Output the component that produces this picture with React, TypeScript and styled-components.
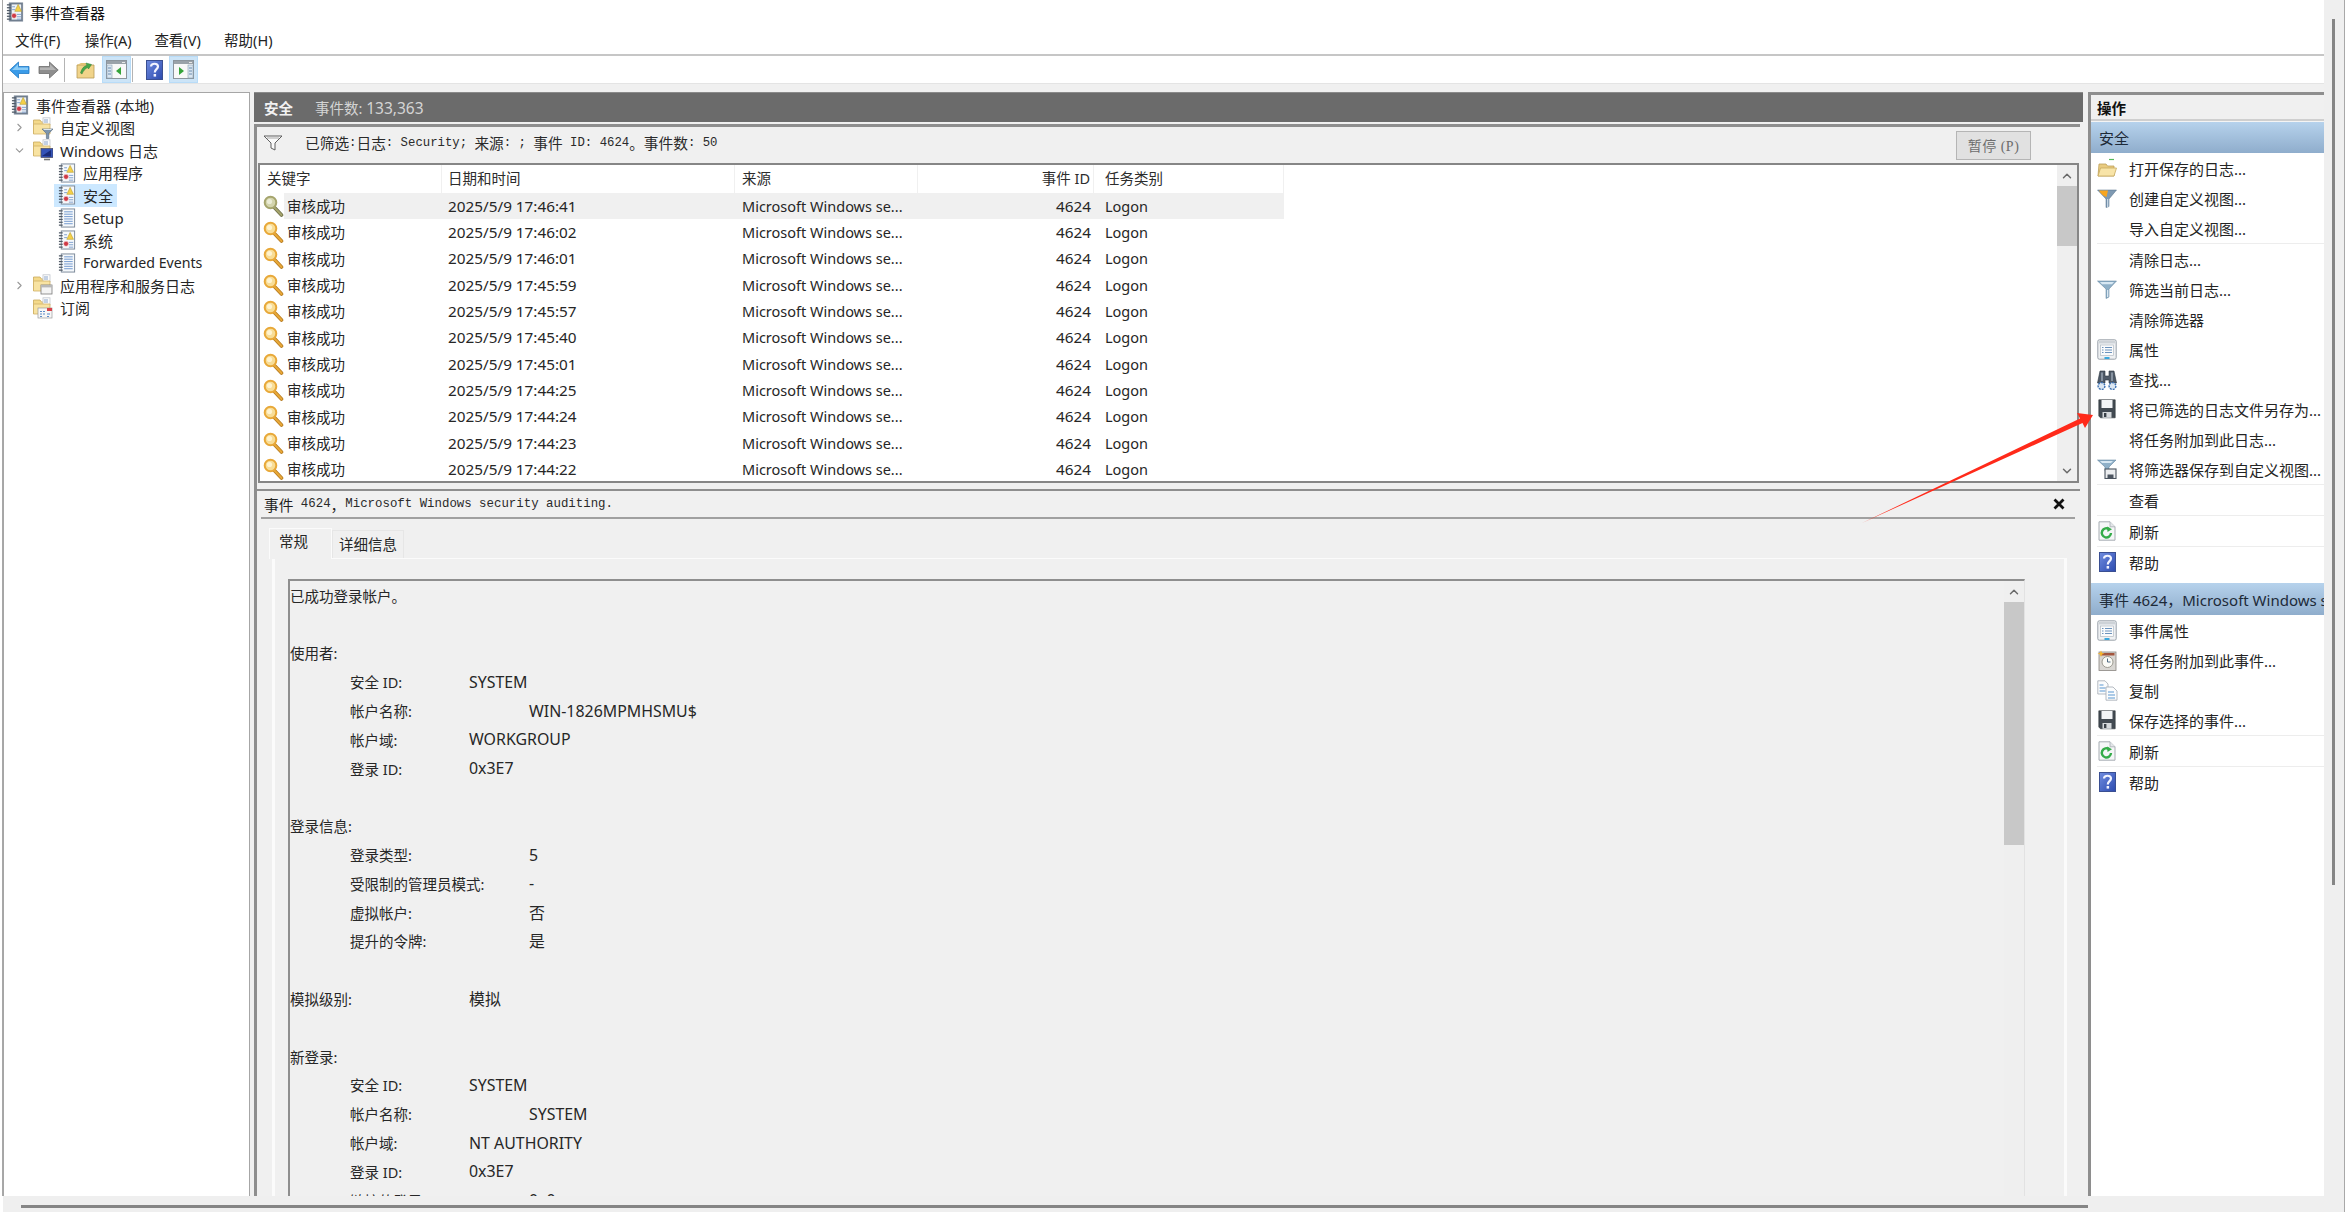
import React from 'react';
import styled, { createGlobalStyle } from 'styled-components';
import { ChevronRight, ChevronDown, ChevronUp } from 'lucide-react';

const UI = '"Noto Sans", "Noto Sans CJK SC", sans-serif';
const MONO = '"Liberation Mono", "Noto Sans CJK SC", monospace';

const Global = createGlobalStyle`
  html, body { margin: 0; padding: 0; overflow: hidden; background: #fff; }
  * { box-sizing: border-box; }
  svg { display: block; flex: none; }
`;

const Screen = styled.div`
  position: relative; width: 2345px; height: 1212px; overflow: hidden; background: #fff;
  display: flex; flex-direction: column; padding-left: 2px;
  font-family: ${UI}; font-size: 15px; color: #262626;
`;
const Upper = styled.div`display: flex; height: 1196px; flex: none;`;
const Main = styled.div`
  width: 2322px; flex: none; display: flex; flex-direction: column;
  border-left: 1px solid #a8a8a8;
`;
const VScroll = styled.div`
  flex: 1; background: #efefef; padding: 19px 0 0 8px; border-right: 1px solid #a8a8a8;
`;
const VThumb = styled.div`width: 3px; height: 866px; background: #858585;`;
const HScroll = styled.div`
  flex: 1; background: #efefef; padding: 9px 0 0 18px; margin-left: 1px; border-right: 1px solid #a8a8a8;
`;
const HThumb = styled.div`width: 2067px; height: 3px; background: #858585;`;

const TitleBar = styled.div`
  height: 28px; display: flex; align-items: center; gap: 6px; padding: 0 0 4px 3px; color: #111; flex: none;
`;
const MenuBar = styled.div`
  height: 28px; display: flex; align-items: center; padding: 0 0 4px 12px; gap: 20px; flex: none;
  border-bottom: 2px solid #c6c6c6; font-size: 14.5px; color: #222;
`;
const MenuItem = styled.span`width: 49.7px; white-space: nowrap;`;
const ToolBar = styled.div`
  height: 28px; display: flex; align-items: center; padding-left: 4px; flex: none;
  border-bottom: 1px solid #e4e4e4;
`;
const ToolBtn = styled.div<{ $ml?: number; $on?: boolean }>`
  width: ${p => (p.$on ? 29 : 24)}px; height: 27px; margin-left: ${p => p.$ml ?? 0}px;
  display: flex; align-items: center; justify-content: center;
  background: ${p => (p.$on ? '#cce4f7' : 'transparent')};
  border: 1px solid ${p => (p.$on ? '#b8dcf8' : 'transparent')};
`;
const ToolSep = styled.div<{ $ml: number }>`
  width: 1px; height: 24px; background: #b4b4b4; margin-left: ${p => p.$ml}px;
`;

const Workspace = styled.div`
  flex: 1; min-height: 0; display: flex; background: #f0f0f0; padding-top: 8px; overflow: hidden;
`;
const TreePanel = styled.div`
  width: 247px; flex: none; background: #fff; border: 1px solid #a6a6a6; border-bottom: none;
  padding-top: 1px; margin-right: 4px;
`;
const TreeRow = styled.div<{ $pad: number }>`
  height: 22.5px; display: flex; align-items: center; padding-left: ${p => p.$pad}px; white-space: nowrap;
`;
const TreeItem = styled.div<{ $sel?: boolean }>`
  display: flex; align-items: center; height: 23px; gap: 7px; padding: 0 4px;
  background: ${p => (p.$sel ? '#cce8ff' : 'transparent')};
`;
const TreeChevron = styled.div`width: 20px; display: flex; align-items: center; color: #999;`;
const FolderRow = styled.div`display: flex; align-items: center; gap: 7px;`;
const NarrowLatin = styled.span`font-size: 14.2px;`;

const Center = styled.div`width: 1829px; flex: none; display: flex; flex-direction: column; overflow: hidden;`;
const LogHeader = styled.div`
  height: 30px; flex: none; background: #6b6b6b; display: flex; align-items: center;
  padding-left: 10px; gap: 22px; border-top: 1px solid #8a8a8a; margin-bottom: 2px;
`;
const LogTitle = styled.span`font-weight: 700; color: #f2f2f2; font-size: 14.5px;`;
const LogCount = styled.span`color: #d4d4d4; font-size: 14.5px;`;
const Digits = styled.span`font-size: 15.5px;`;
const CenterBody = styled.div`
  width: 1826px; flex: 1; min-height: 0; display: flex; flex-direction: column;
  border-left: 3px solid #8e8e8e; border-top: 3px solid #8e8e8e;
`;
const FilterBar = styled.div`
  height: 36px; flex: none; display: flex; align-items: center; padding: 0 49px 0 6px; background: #f0f0f0;
`;
const FilterIconWrap = styled.div`margin-bottom: 5px;`;
const FilterText = styled.div`
  flex: 1; margin: 0 0 5px 22px; white-space: pre; font-size: 14.7px; color: #2a2a2a; display: flex; align-items: center;
`;
const Mono = styled.span`font-family: ${MONO}; font-size: 12.3px;`;
const PauseBtn = styled.div`
  width: 75px; height: 29px; background: #e1e1e1; border: 1px solid #b5b5b5; color: #6d6d6d;
  display: flex; align-items: center; justify-content: center; font-size: 14px; font-family: "Liberation Serif", "Noto Sans CJK SC", serif;
  letter-spacing: 0.5px;
`;
const ListBox = styled.div`
  height: 320px; flex: none; margin: 0 1px; border: 2px solid #868686; background: #fff; display: flex;
`;
const Table = styled.div`flex: 1; min-width: 0; overflow: hidden;`;
const HeadRow = styled.div`
  height: 27.5px; display: grid; grid-template-columns: 182px 293px 183px 176px 190px; align-items: stretch;
  font-size: 14.5px; color: #2c2c2c;
`;
const HeadCell = styled.div<{ $pad?: number; $right?: boolean }>`
  display: flex; align-items: center; padding: 0 3px 2px ${p => p.$pad ?? 6}px;
  justify-content: ${p => (p.$right ? 'flex-end' : 'flex-start')};
  border-right: 1px solid #f0f0f0;
`;
const DataRow = styled.div`
  height: 26.33px; display: grid; grid-template-columns: 24px 158px 293px 183px 176px 190px; align-items: stretch;
`;
const IconCell = styled.div`display: flex; align-items: center; padding-left: 3px;`;
const Cell = styled.div<{ $on?: boolean; $pad?: number; $right?: boolean; $num?: boolean }>`
  display: flex; align-items: center; white-space: nowrap;
  padding-left: ${p => p.$pad ?? 3}px; padding-right: 3px;
  justify-content: ${p => (p.$right ? 'flex-end' : 'flex-start')};
  background: ${p => (p.$on ? '#f0f0f0' : 'transparent')};
  font-size: ${p => (p.$num ? '15.3px' : '14.5px')};
`;
const ScrollTrack = styled.div`
  width: 20px; flex: none; background: #efefef; display: flex; flex-direction: column; align-items: center;
  color: #6a6a6a;
`;
const ScrollBtn = styled.div`height: 21px; flex: none; width: 100%; display: flex; align-items: center; justify-content: center;`;
const ScrollThumb = styled.div<{ $h: number }>`height: ${p => p.$h}px; width: 100%; flex: none; background: #c8c8c8;`;
const ScrollFill = styled.div`flex: 1;`;

const EventPane = styled.div`flex: 1; min-height: 0; margin-top: 6px; border-top: 2px solid #8e8e8e; display: flex; flex-direction: column;`;
const EventTitle = styled.div`
  height: 26px; flex: none; display: flex; align-items: center; justify-content: space-between;
  padding: 0 14px 0 7px; white-space: pre;
`;
const EventCaption = styled.div`display: flex; align-items: center; font-size: 14.7px; color: #1e1e1e;`;
const EventMono = styled.span`font-family: ${MONO}; font-size: 12.4px; color: #2a2a2a;`;
const Rule = styled.div`height: 2px; flex: none; background: #a0a0a0; margin: 0 5px 0 4px;`;
const Tabs = styled.div`display: flex; align-items: flex-end; height: 30px; flex: none; margin: 9px 0 0 12px;`;
const Tab = styled.div<{ $on?: boolean }>`
  width: ${p => (p.$on ? 63 : 72)}px; height: ${p => (p.$on ? 31 : 28)}px;
  margin-bottom: ${p => (p.$on ? -1 : 0)}px; position: relative;
  display: flex; justify-content: ${p => (p.$on ? 'flex-start' : 'center')}; align-items: ${p => (p.$on ? 'flex-start' : 'center')};
  padding: ${p => (p.$on ? '1px 0 0 9px' : '0 0 2px 0')}; font-size: 14.5px;
  background: #f0f0f0;
  border: 1px solid ${p => (p.$on ? '#fbfbfb' : '#e6e6e6')}; border-bottom: none;
`;
const TabPanel = styled.div`
  flex: 1; min-height: 0; margin: 0 13px 0 15px; border: 3px solid #fbfbfb; border-top-width: 1px; border-bottom: none;
  padding: 20px 39px 0 13px; display: flex; flex-direction: column;
`;
const DetailBox = styled.div`
  flex: 1; min-height: 0; display: flex; border-top: 2px solid #8e8e8e; border-left: 2px solid #8e8e8e;
  border-right: 1px solid #e2e2e2;
`;
const DetailText = styled.div`flex: 1; min-width: 0; overflow: hidden;`;
const Line = styled.div<{ $indent?: boolean }>`
  height: 28.8px; display: flex; align-items: center; padding-left: ${p => (p.$indent ? 60 : 0)}px;
  font-size: 14.5px; white-space: nowrap; color: #272727;
`;
const Label = styled.span<{ $w: number }>`width: ${p => p.$w}px; flex: none;`;
const Value = styled.span`font-size: 15.9px;`;

const ActionPane = styled.div`
  flex: 1; min-width: 0; margin-left: 5px; background: #fff; display: flex; flex-direction: column;
  border-left: 3px solid #8e8e8e; border-top: 3px solid #8e8e8e; white-space: nowrap; overflow: hidden;
`;
const ActionHead = styled.div`
  height: 24px; flex: none; background: #f0f0f0; display: flex; align-items: center; padding-left: 6px;
  font-weight: 700; font-size: 14.5px; color: #111;
`;
const ActionRule = styled.div`height: 3px; flex: none; background: #cfcfcf; border-bottom: 1px solid #f4f4f4;`;
const Band = styled.div<{ $h: number }>`
  height: ${p => p.$h}px; flex: none; display: flex; align-items: center; padding-left: 8px; overflow: hidden;
  background: linear-gradient(#b6d2ec, #8fadcc); color: #1d2a38;
`;
const ActionItem = styled.div`
  height: 30px; flex: none; display: flex; align-items: center; padding-left: 6px; gap: 12px; color: #242424;
`;
const ActionIcon = styled.div`width: 20px; height: 22px; flex: none; display: flex; align-items: center; justify-content: center;`;
const ActionSep = styled.div`height: 1px; flex: none; margin-left: 6px; background: #ededed;`;
const BandGap = styled.div`height: 6px; flex: none;`;
const ArrowLayer = styled.svg`position: absolute; left: 0; top: 0; pointer-events: none;`;

/* ---------- icons ---------- */
const LogIcon = ({ warn, dark }: { warn?: boolean; dark?: boolean }) => (
  <svg width="18" height="20" viewBox="0 0 18 21">
    <rect x="3" y="1" width="14" height="19" fill={dark ? '#6a7789' : '#f5f8fb'} stroke="#7b8898" />
    <rect x="5.5" y="2.5" width="10" height="16" fill="#eef2f6" opacity={dark ? 1 : 0} />
    {[3, 6, 9, 12, 15, 18].map(y => <path key={y} d={`M0.5 ${y}h4`} stroke="#505a66" strokeWidth="1.3" />)}
    {warn ? (
      <>
        {[5, 8].map(y => <path key={y} d={`M6 ${y}h3`} stroke="#7fa0cc" strokeWidth="1" />)}
        {[13, 15.5, 18].map(y => <path key={y} d={`M11 ${y}h4.5`} stroke="#7fa0cc" strokeWidth="1" />)}
        <path d="M12.3 2.5 L15.8 9.8 H8.8Z" fill="#f5d048" stroke="#b49a2c" strokeWidth=".6" />
        <circle cx="8" cy="14.5" r="2.6" fill="#cf3a46" stroke="#f3d0d0" strokeWidth=".6" />
      </>
    ) : (
      [4, 6.5, 9, 11.5, 14, 16.5].map(y => <path key={y} d={`M6 ${y}h9`} stroke="#7ba0d2" strokeWidth="1.1" />)
    )}
  </svg>
);

const FolderBase = ({ children }: { children?: React.ReactNode }) => (
  <svg width="20" height="22" viewBox="0 0 20 22">
    <path d="M0.5 3 H7 L8.5 5 H13 V16.5 H0.5Z" fill="#f4d98a" stroke="#c9a95c" strokeWidth=".8" />
    <rect x="10" y="0.8" width="7" height="7" fill="#fdfdfd" stroke="#c0c6ce" strokeWidth=".8" />
    <path d="M11 3h4M11 5h4" stroke="#7d9ac4" strokeWidth=".9" />
    <path d="M0.5 7 H17 V17 H0.5Z" fill="#f8e3a2" stroke="#cfb065" strokeWidth=".8" />
    {children}
  </svg>
);
const SmallFunnel = () => (
  <g>
    <path d="M9 12 H20 L15.8 16.5 V21.5 H13.4 V16.5Z" fill="#7d95ac" stroke="#52677c" strokeWidth=".6" />
    <path d="M10.5 12.5 H18.5" stroke="#dce6ef" strokeWidth="1" />
  </g>
);
const Monitor = () => (
  <g>
    <rect x="8" y="9.5" width="12" height="9" fill="#3453b8" stroke="#4a4a5c" strokeWidth=".7" />
    <path d="M9 17 L18 11 V17.5Z" fill="#1a2c7a" />
    <path d="M11 20.5h6" stroke="#777" strokeWidth="1.6" />
  </g>
);
const WinGlyph = () => (
  <g>
    <rect x="8" y="11" width="11" height="9" fill="#f4f4f4" stroke="#7b7b7b" strokeWidth=".8" />
    <rect x="8" y="11" width="11" height="2.4" fill="#b8b8b8" />
  </g>
);
const CalGlyph = () => (
  <g>
    <rect x="5" y="11" width="14" height="10" fill="#f7f7f7" stroke="#9a9a9a" strokeWidth=".7" />
    <rect x="14" y="11" width="5" height="3" fill="#d8424a" />
    <path d="M7 14.5h2M10 14.5h2M7 17h2M10 17h2M14 17h3M7 19.5h2M14 19.5h2" stroke="#5c8bc8" strokeWidth="1.1" />
  </g>
);

const KeyIcon = ({ dim }: { dim?: boolean }) => {
  const main = dim ? '#a5a46c' : '#e8a838';
  const edge = dim ? '#6f7049' : '#b57a1f';
  return (
    <svg width="21" height="22" viewBox="0 0 21 22">
      <path d="M10 11 L18.5 20" stroke={edge} strokeWidth="3.6" strokeLinecap="round" />
      <path d="M10 11 L18.5 20" stroke={main} strokeWidth="2" strokeLinecap="round" />
      <circle cx="7.5" cy="7.5" r="5.8" fill={dim ? '#d3d4ac' : '#f8dd96'} stroke={main} strokeWidth="2" />
      <circle cx="6.5" cy="6.5" r="2.6" fill={dim ? '#ebecd6' : '#fff3cf'} />
    </svg>
  );
};

const BackIcon = () => (
  <svg width="21" height="18" viewBox="0 0 21 18">
    <path d="M9.5 1 L0.8 9 L9.5 17 V12.5 H20 V5.5 H9.5Z" fill="#3a9be8" stroke="#1f78c4" strokeWidth=".8" />
    <path d="M9 3 L3 9 H19 V6.5 H9Z" fill="#8ccdf7" />
  </svg>
);
const ForwardIcon = () => (
  <svg width="21" height="18" viewBox="0 0 21 18">
    <path d="M11.5 1 L20.2 9 L11.5 17 V12.5 H1 V5.5 H11.5Z" fill="#8e8e8e" stroke="#6e6e6e" strokeWidth=".8" />
    <path d="M12 3 L18 9 H2 V6.5 H12Z" fill="#b4b4b4" />
  </svg>
);
const UpFolderIcon = () => (
  <svg width="20" height="19" viewBox="0 0 20 19">
    <path d="M1 5 H18 V18 H1Z" fill="#f1d48a" stroke="#b79a55" strokeWidth=".8" />
    <path d="M1 5 L5 3 H10 V5Z" fill="#e2c274" />
    <path d="M4.5 13 C6 8 8 6 11 5.5 L10 3 L15.5 4.5 L12.5 9 L11.5 7.5 C9.5 8.5 7 11 6 14Z" fill="#46a84a" stroke="#2f7d35" strokeWidth=".5" />
  </svg>
);
const PaneIcon = ({ flip }: { flip?: boolean }) => (
  <svg width="21" height="19" viewBox="0 0 21 19">
    <rect x=".5" y=".5" width="20" height="18" fill="#f8f8f8" stroke="#8b949c" />
    <rect x="1" y="1" width="19" height="3" fill="#9aa2a9" />
    <path d="M16 2.5h3" stroke="#e8e8e8" />
    {flip ? (
      <>
        <rect x="15" y="5" width="5" height="13" fill="#dbe6f0" stroke="#8aa0b4" strokeWidth=".6" />
        <path d="M16 8h3M16 11h3M16 14h3" stroke="#6b8caf" />
        <path d="M6 7 L11 11 L6 15Z" fill="#35a33a" />
      </>
    ) : (
      <>
        <rect x="1" y="5" width="5" height="13" fill="#dbe6f0" stroke="#8aa0b4" strokeWidth=".6" />
        <path d="M2 8h3M2 11h3M2 14h3" stroke="#6b8caf" />
        <path d="M15 7 L10 11 L15 15Z" fill="#35a33a" />
      </>
    )}
  </svg>
);
const HelpIcon = ({ size = 17 }: { size?: number }) => (
  <svg width={size} height={size + 3} viewBox="0 0 17 20">
    <defs>
      <linearGradient id="hp" x1="0" y1="0" x2="1" y2="1">
        <stop offset="0" stopColor="#6f8ce0" />
        <stop offset="1" stopColor="#2c4aae" />
      </linearGradient>
    </defs>
    <rect x=".5" y=".5" width="16" height="19" fill="url(#hp)" stroke="#3a4f92" />
    <path d="M5 6.5 C5 2.8 12 2.8 12 6.5 C12 9.2 8.8 9.2 8.8 12.4" fill="none" stroke="#f2f4ff" strokeWidth="2.2" />
    <rect x="7.6" y="14" width="2.5" height="2.6" fill="#f2f4ff" />
  </svg>
);
const FilterOutline = () => (
  <svg width="20" height="16" viewBox="0 0 20 16">
    <path d="M1 1 H19 L12 8 V15 L8 13 V8Z" fill="#fafafa" stroke="#5e5e5e" strokeWidth="1" />
    <path d="M4 3h12" stroke="#a8a8a8" />
  </svg>
);
const CloseGlyph = () => (
  <svg width="14" height="14" viewBox="0 0 14 14">
    <path d="M2.5 2.5 L11.5 11.5 M11.5 2.5 L2.5 11.5" stroke="#111" strokeWidth="2.8" />
  </svg>
);
const OpenFolder = () => (
  <svg width="20" height="20" viewBox="0 0 20 20">
    <path d="M12 1.5h5" stroke="#55b85a" strokeWidth="1.2" />
    <path d="M2 6 H9 L10.5 8 H17 V18 H1Z" fill="#e9cb80" stroke="#bd9f58" strokeWidth=".8" />
    <path d="M1 18 L3.5 10 H19.5 L17 18Z" fill="#f8e4a8" stroke="#c7a95e" strokeWidth=".8" />
  </svg>
);
const ColorFunnel = () => (
  <svg width="20" height="20" viewBox="0 0 20 20">
    <path d="M0.5 2 H19.5 L12 11 V18.5 L9 19.5 V11Z" fill="#7e99b2" stroke="#4e6a84" strokeWidth=".5" />
    <path d="M2 2.5 H11 L9.5 9 C7 8.5 4 6 2 2.5Z" fill="#f8a51e" />
    <path d="M10 11h1.3v8h-1.3z" fill="#c6d6e4" />
  </svg>
);
const BlueFunnel = () => (
  <svg width="20" height="20" viewBox="0 0 20 20">
    <path d="M0.5 2 H19.5 L12 10 V18 L9 19.5 V10Z" fill="#8fb0c8" stroke="#577a96" strokeWidth=".5" />
    <path d="M3 3 H17 L15 5.2 H5Z" fill="#d7e7f2" />
    <path d="M10 11h1.3v7h-1.3z" fill="#dbe8f2" />
  </svg>
);
const SaveFunnel = () => (
  <svg width="20" height="20" viewBox="0 0 20 20">
    <path d="M0.5 1 H19 L12 8 V12 H8 V8Z" fill="#8fb0c8" stroke="#577a96" strokeWidth=".5" />
    <path d="M3 2 H16 L14 4 H5Z" fill="#d7e7f2" />
    <rect x="8" y="10" width="11" height="9.5" fill="#eceef0" stroke="#4c5560" strokeWidth="1.1" />
    <rect x="10.5" y="15.5" width="6" height="4" fill="#4c5560" />
  </svg>
);
const PropsIcon = () => (
  <svg width="20" height="21" viewBox="0 0 20 21">
    <rect x=".8" y=".8" width="18.4" height="19.4" rx="1.5" fill="#eff1f3" stroke="#9aa2aa" />
    <rect x="2" y="2" width="16" height="2.4" fill="#cdd2d7" />
    <rect x="3.5" y="6" width="13" height="10.5" fill="#fafbfc" stroke="#b4bcc4" strokeWidth=".7" />
    <path d="M5 8.5h1.5M8 8.5h7M5 11h1.5M8 11h7M5 13.5h1.5M8 13.5h7" stroke="#6d93bd" />
    <rect x="7.5" y="18" width="5" height="2" fill="#3aa7dd" />
  </svg>
);
const Binoculars = () => (
  <svg width="20" height="21" viewBox="0 0 20 21">
    <path d="M3 2 H8 V7 H12 V2 H17 L19.5 14 H12 V11 H8 V14 H0.5Z" fill="#4f5a68" stroke="#2c3540" strokeWidth=".6" />
    <path d="M5 3.5 V12 M15 3.5 V12" stroke="#9aa6b4" strokeWidth="1.5" />
    <circle cx="4.5" cy="17" r="3.4" fill="#dce7f2" stroke="#3a6fb0" strokeWidth="1.4" strokeDasharray="2 1" />
    <circle cx="15.5" cy="17" r="3.4" fill="#dce7f2" stroke="#3a6fb0" strokeWidth="1.4" strokeDasharray="2 1" />
  </svg>
);
const Floppy = () => (
  <svg width="18" height="20" viewBox="0 0 18 20">
    <path d="M.8 .8 H17.2 V18.8 H2.5 L.8 17Z" fill="#424a52" stroke="#2c3238" strokeWidth=".6" />
    <rect x="3.5" y="1" width="11" height="8" fill="#f3f5f7" />
    <rect x="4.5" y="13" width="9" height="5.8" fill="#d5d9dc" />
    <rect x="6" y="14" width="2.4" height="4" fill="#3a4148" />
  </svg>
);
const RefreshDoc = () => (
  <svg width="18" height="20" viewBox="0 0 18 20">
    <path d="M1 .8 H12 L17 5.8 V19.2 H1Z" fill="#f5f6f7" stroke="#a6acb2" />
    <path d="M12 .8 V5.8 H17" fill="#e3e6e9" stroke="#a6acb2" strokeWidth=".8" />
    <path d="M13 12 A4.6 4.6 0 1 1 11.2 8.2" fill="none" stroke="#35ac4a" strokeWidth="2.4" />
    <path d="M9 5.5 L14 8.2 L9.5 11Z" fill="#35ac4a" />
  </svg>
);
const TaskIcon = () => (
  <svg width="20" height="21" viewBox="0 0 20 21">
    <rect x="2" y="2" width="17" height="18.5" fill="#d8d6d2" stroke="#8b8680" strokeWidth=".8" />
    <rect x="3.5" y="3" width="14" height="2.5" fill="#a3553d" />
    <circle cx="10.5" cy="12" r="5.5" fill="#fbfbf6" stroke="#9c9a90" />
    <path d="M10.5 8.5 V12 H13.5" stroke="#4f6a82" strokeWidth="1" fill="none" />
    <path d="M4 .5 L5 3 L7.5 3.5 L5 4.5 L4 7 L3 4.5 L.5 3.5 L3 3Z" fill="#f7b52a" />
  </svg>
);
const CopyIcon = () => (
  <svg width="21" height="21" viewBox="0 0 21 21">
    <path d="M.8 .8 H8 L11 4 V14 H.8Z" fill="#fbfcfd" stroke="#a2aab3" strokeWidth=".8" />
    <path d="M2.5 5h4M2.5 8h6M2.5 11h6" stroke="#5a97d0" />
    <path d="M9 7 H16 L20 11 V20.2 H9Z" fill="#fbfcfd" stroke="#a2aab3" strokeWidth=".8" />
    <path d="M11 12h6M11 15h7M11 18h7" stroke="#5a97d0" />
  </svg>
);

/* ---------- data ---------- */
const ROWS = ['17:46:41', '17:46:02', '17:46:01', '17:45:59', '17:45:57', '17:45:40', '17:45:01', '17:44:25', '17:44:24', '17:44:23', '17:44:22'];

type Det = { t?: string; label?: string; value?: string; w?: number; indent?: boolean };
const DETAILS: Det[] = [
  { t: '已成功登录帐户。' }, {},
  { t: '使用者:' },
  { indent: true, label: '安全 ID:', value: 'SYSTEM', w: 119 },
  { indent: true, label: '帐户名称:', value: 'WIN-1826MPMHSMU$', w: 179 },
  { indent: true, label: '帐户域:', value: 'WORKGROUP', w: 119 },
  { indent: true, label: '登录 ID:', value: '0x3E7', w: 119 }, {},
  { t: '登录信息:' },
  { indent: true, label: '登录类型:', value: '5', w: 179 },
  { indent: true, label: '受限制的管理员模式:', value: '-', w: 179 },
  { indent: true, label: '虚拟帐户:', value: '否', w: 179 },
  { indent: true, label: '提升的令牌:', value: '是', w: 179 }, {},
  { label: '模拟级别:', value: '模拟', w: 179 }, {},
  { t: '新登录:' },
  { indent: true, label: '安全 ID:', value: 'SYSTEM', w: 119 },
  { indent: true, label: '帐户名称:', value: 'SYSTEM', w: 179 },
  { indent: true, label: '帐户域:', value: 'NT AUTHORITY', w: 119 },
  { indent: true, label: '登录 ID:', value: '0x3E7', w: 119 },
  { indent: true, label: '链接的登录 ID:', value: '0x0', w: 179 },
];

const Action = ({ icon, children }: { icon?: React.ReactNode; children: React.ReactNode }) => (
  <ActionItem><ActionIcon>{icon}</ActionIcon><span>{children}</span></ActionItem>
);

export default function App() {
  return (
    <Screen>
      <Global />
      <Upper>
        <Main>
          <TitleBar><LogIcon warn dark /><span>事件查看器</span></TitleBar>
          <MenuBar>
            <MenuItem>文件(F)</MenuItem><MenuItem>操作(A)</MenuItem><MenuItem>查看(V)</MenuItem><MenuItem>帮助(H)</MenuItem>
          </MenuBar>
          <ToolBar>
            <ToolBtn><BackIcon /></ToolBtn>
            <ToolBtn $ml={5}><ForwardIcon /></ToolBtn>
            <ToolSep $ml={4} />
            <ToolBtn $ml={9}><UpFolderIcon /></ToolBtn>
            <ToolBtn $ml={4} $on><PaneIcon /></ToolBtn>
            <ToolSep $ml={1} />
            <ToolBtn $ml={9}><HelpIcon /></ToolBtn>
            <ToolBtn $ml={3} $on><PaneIcon flip /></ToolBtn>
          </ToolBar>
          <Workspace>
            <TreePanel>
              <TreeRow $pad={3}><TreeItem><LogIcon warn dark /><span>事件查看器 (本地)</span></TreeItem></TreeRow>
              <TreeRow $pad={9}><TreeChevron><ChevronRight size={13} /></TreeChevron><FolderRow><FolderBase><SmallFunnel /></FolderBase><span>自定义视图</span></FolderRow></TreeRow>
              <TreeRow $pad={9}><TreeChevron><ChevronDown size={13} /></TreeChevron><FolderRow><FolderBase><Monitor /></FolderBase><span>Windows 日志</span></FolderRow></TreeRow>
              <TreeRow $pad={50}><TreeItem><LogIcon warn /><span>应用程序</span></TreeItem></TreeRow>
              <TreeRow $pad={50}><TreeItem $sel><LogIcon warn /><span>安全</span></TreeItem></TreeRow>
              <TreeRow $pad={50}><TreeItem><LogIcon /><span>Setup</span></TreeItem></TreeRow>
              <TreeRow $pad={50}><TreeItem><LogIcon warn /><span>系统</span></TreeItem></TreeRow>
              <TreeRow $pad={50}><TreeItem><LogIcon /><NarrowLatin>Forwarded Events</NarrowLatin></TreeItem></TreeRow>
              <TreeRow $pad={9}><TreeChevron><ChevronRight size={13} /></TreeChevron><FolderRow><FolderBase><WinGlyph /></FolderBase><span>应用程序和服务日志</span></FolderRow></TreeRow>
              <TreeRow $pad={29}><FolderRow><FolderBase><CalGlyph /></FolderBase><span>订阅</span></FolderRow></TreeRow>
            </TreePanel>

            <Center>
              <LogHeader>
                <LogTitle>安全</LogTitle>
                <LogCount>事件数: <Digits>133,363</Digits></LogCount>
              </LogHeader>
              <CenterBody>
                <FilterBar>
                  <FilterIconWrap><FilterOutline /></FilterIconWrap>
                  <FilterText>已筛选<Mono>:</Mono>日志<Mono>: Security; </Mono>来源<Mono>: ; </Mono>事件<Mono> ID: 4624</Mono>。事件数<Mono>: 50</Mono></FilterText>
                  <PauseBtn>暂停 (P)</PauseBtn>
                </FilterBar>
                <ListBox>
                  <Table>
                    <HeadRow>
                      <HeadCell $pad={7}>关键字</HeadCell>
                      <HeadCell>日期和时间</HeadCell>
                      <HeadCell $pad={7}>来源</HeadCell>
                      <HeadCell $right>事件 ID</HeadCell>
                      <HeadCell $pad={11}>任务类别</HeadCell>
                    </HeadRow>
                    {ROWS.map((time, i) => (
                      <DataRow key={time}>
                        <IconCell><KeyIcon dim={i === 0} /></IconCell>
                        <Cell $on={i === 0}>审核成功</Cell>
                        <Cell $on={i === 0} $pad={6} $num>2025/5/9 {time}</Cell>
                        <Cell $on={i === 0} $pad={7}>Microsoft Windows se...</Cell>
                        <Cell $on={i === 0} $right $num>4624</Cell>
                        <Cell $on={i === 0} $pad={11}>Logon</Cell>
                      </DataRow>
                    ))}
                  </Table>
                  <ScrollTrack>
                    <ScrollBtn><ChevronUp size={14} strokeWidth={2.5} /></ScrollBtn>
                    <ScrollThumb $h={60} />
                    <ScrollFill />
                    <ScrollBtn><ChevronDown size={14} strokeWidth={2.5} /></ScrollBtn>
                  </ScrollTrack>
                </ListBox>
                <EventPane>
                  <EventTitle>
                    <EventCaption>事件<EventMono> 4624</EventMono>，<EventMono>Microsoft Windows security auditing.</EventMono></EventCaption>
                    <CloseGlyph />
                  </EventTitle>
                  <Rule />
                  <Tabs>
                    <Tab $on>常规</Tab>
                    <Tab>详细信息</Tab>
                  </Tabs>
                  <TabPanel>
                    <DetailBox>
                      <DetailText>
                        {DETAILS.map((d, i) => (
                          <Line key={i} $indent={d.indent}>
                            {d.t}
                            {d.label && <Label $w={d.w ?? 0}>{d.label}</Label>}
                            {d.value && <Value>{d.value}</Value>}
                          </Line>
                        ))}
                      </DetailText>
                      <ScrollTrack>
                        <ScrollBtn><ChevronUp size={14} strokeWidth={2.5} /></ScrollBtn>
                        <ScrollThumb $h={243} />
                        <ScrollFill />
                      </ScrollTrack>
                    </DetailBox>
                  </TabPanel>
                </EventPane>
              </CenterBody>
            </Center>

            <ActionPane>
              <ActionHead>操作</ActionHead>
              <ActionRule />
              <Band $h={31}>安全</Band>
              <Action icon={<OpenFolder />}>打开保存的日志...</Action>
              <Action icon={<ColorFunnel />}>创建自定义视图...</Action>
              <Action>导入自定义视图...</Action>
              <ActionSep />
              <Action>清除日志...</Action>
              <Action icon={<BlueFunnel />}>筛选当前日志...</Action>
              <Action>清除筛选器</Action>
              <Action icon={<PropsIcon />}>属性</Action>
              <Action icon={<Binoculars />}>查找...</Action>
              <Action icon={<Floppy />}>将已筛选的日志文件另存为...</Action>
              <Action>将任务附加到此日志...</Action>
              <Action icon={<SaveFunnel />}>将筛选器保存到自定义视图...</Action>
              <ActionSep />
              <Action>查看</Action>
              <ActionSep />
              <Action icon={<RefreshDoc />}>刷新</Action>
              <ActionSep />
              <Action icon={<HelpIcon />}>帮助</Action>
              <BandGap />
              <Band $h={32}>事件 4624，Microsoft Windows security auditing.</Band>
              <Action icon={<PropsIcon />}>事件属性</Action>
              <Action icon={<TaskIcon />}>将任务附加到此事件...</Action>
              <Action icon={<CopyIcon />}>复制</Action>
              <Action icon={<Floppy />}>保存选择的事件...</Action>
              <ActionSep />
              <Action icon={<RefreshDoc />}>刷新</Action>
              <ActionSep />
              <Action icon={<HelpIcon />}>帮助</Action>
            </ActionPane>
          </Workspace>
        </Main>
        <VScroll><VThumb /></VScroll>
      </Upper>
      <HScroll><HThumb /></HScroll>
      <ArrowLayer width="2345" height="1212" viewBox="0 0 2345 1212">
        <polygon points="1862,523 2080,418.5 2077,413 2093,415 2085,428 2082.5,423" fill="#ff2a1a" />
      </ArrowLayer>
    </Screen>
  );
}
